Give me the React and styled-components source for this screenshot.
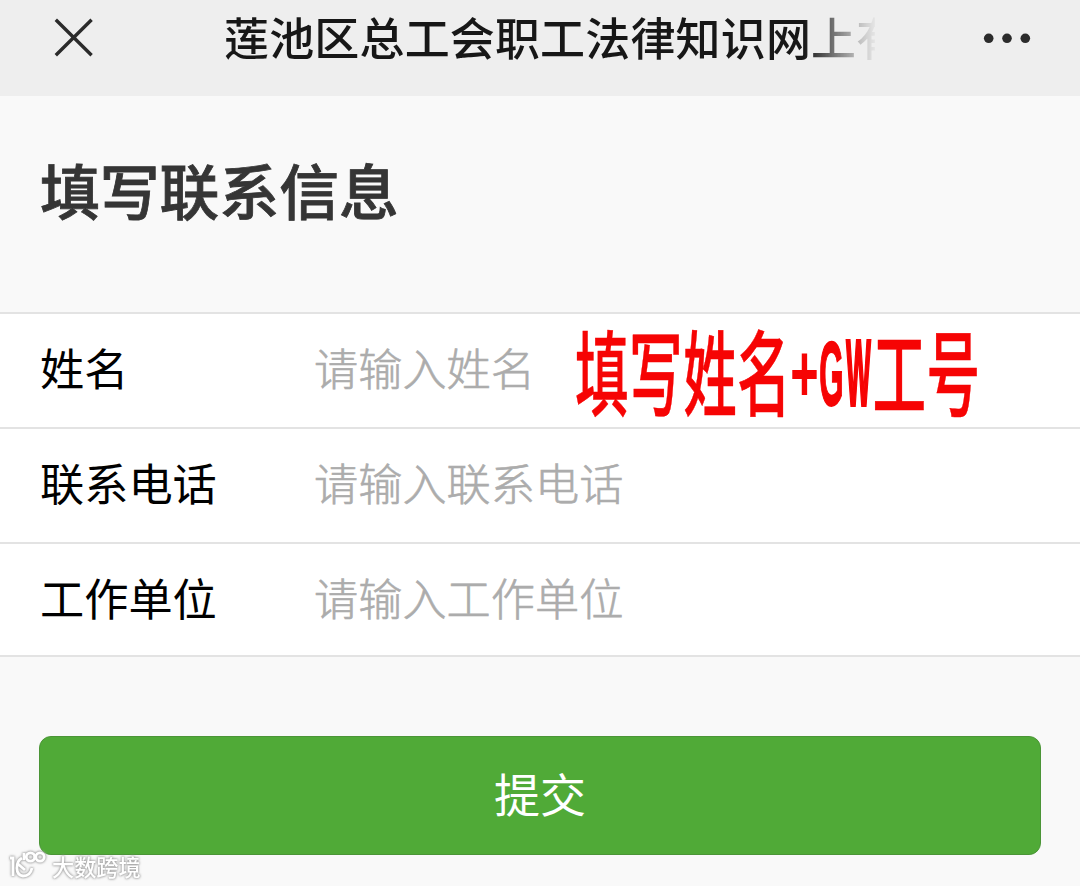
import React from 'react';
import styled, { createGlobalStyle } from 'styled-components';

const GlobalStyle = createGlobalStyle`
  * { box-sizing: border-box; }
  body {
    margin: 0;
    background: #f9f9f9;
    font-family: "Noto Sans CJK SC", sans-serif;
  }
`;

const Page = styled.div`
  position: relative;
  width: 1080px;
  height: 886px;
  overflow: hidden;
  background: #f9f9f9;
`;

const NavBar = styled.header`
  display: flex;
  align-items: flex-start;
  height: 96px;
  background: #eeeeee;
`;

const CloseIcon = styled.svg`
  flex: none;
  width: 40px;
  height: 40px;
  margin: 18px 0 0 54px;
`;

const NavTitle = styled.div`
  flex: none;
  width: 651px;
  height: 66px;
  margin: 4px 0 0 130px;
  overflow: hidden;
  white-space: nowrap;
  font-size: 45px;
  line-height: 66px;
  letter-spacing: 0.16px;
  font-weight: 500;
  color: #171717;
  -webkit-mask-image: linear-gradient(to right, #000 580px, rgba(0, 0, 0, 0.25) 632px, transparent 654px);
  mask-image: linear-gradient(to right, #000 580px, rgba(0, 0, 0, 0.25) 632px, transparent 654px);
`;

const MoreIcon = styled.svg`
  flex: none;
  width: 48px;
  height: 12px;
  margin: 32px 0 0 108px;
`;

const Heading = styled.h1`
  height: 216px;
  margin: 0;
  padding: 49px 0 0 40px;
  font-size: 59.8px;
  line-height: 88px;
  font-weight: 500;
  -webkit-text-stroke: 0.8px #353535;
  color: #353535;
`;

const Form = styled.form`
  margin: 0;
`;

const Fields = styled.div`
  height: 345px;
  border-top: 2px solid #e3e3e3;
  background: #fff;
`;

const Field = styled.label`
  display: flex;
  align-items: center;
  height: ${({ $height }) => $height}px;
  padding: 0 0 ${({ $lift }) => $lift}px 40px;
  border-bottom: 2px solid #e3e3e3;
`;

const FieldName = styled.span`
  width: 274px;
  font-size: 44.2px;
  line-height: 64px;
  color: #000;
`;

const Input = styled.input`
  width: 700px;
  height: 64px;
  padding: 0;
  border: 0;
  outline: 0;
  background: transparent;
  font: 300 44.2px/64px "Noto Sans CJK SC", sans-serif;
  &::placeholder {
    color: #acacac;
    opacity: 1;
    -webkit-text-stroke: 0.6px #acacac;
  }
`;

const Submit = styled.button`
  display: block;
  width: 1002px;
  height: 119px;
  margin: 79px 0 0 39px;
  padding: 0 0 7px;
  border: 1px solid #4b9537;
  border-radius: 12px;
  background: #50aa37;
  color: #fff;
  font: 400 46px/66px "Noto Sans CJK SC", sans-serif;
`;

const Note = styled.div`
  position: absolute;
  left: 575px;
  top: 319px;
  display: flex;
  align-items: center;
  height: 100px;
  color: #f60404;
  white-space: nowrap;
`;

const NoteHan = styled.span`
  font-size: 53.6px;
  line-height: 80px;
  font-weight: 500;
  letter-spacing: 0.5px;
  -webkit-text-stroke: 0.3px #f60404;
  transform: scaleY(1.74);
`;

const NoteLatin = styled.span`
  display: flex;
  justify-content: center;
  width: 27px;
  font-family: "Liberation Sans", sans-serif;
  font-size: 54px;
  line-height: 80px;
  font-weight: 700;
  -webkit-text-stroke: ${({ $stroke }) => $stroke}px #f60404;
  transform: translate(0, ${({ $shift }) => $shift}px) scale(${({ $sx }) => $sx}, ${({ $sy }) => $sy});
`;

const Watermark = styled.div`
  position: absolute;
  left: 8px;
  top: 849px;
  display: flex;
  align-items: center;
  height: 34px;
  filter: drop-shadow(0 0 1px #999) drop-shadow(0 0 1px #bbb);
`;

const WatermarkLogo = styled.svg`
  width: 40px;
  height: 32px;
  margin-right: 4px;
`;

const WatermarkText = styled.span`
  font-size: 22.2px;
  line-height: 32px;
  font-weight: 500;
  color: #fff;
`;

const fields = [
  { name: '姓名', hint: '请输入姓名', height: 115, lift: 7 },
  { name: '联系电话', hint: '请输入联系电话', height: 115, lift: 7 },
  { name: '工作单位', hint: '请输入工作单位', height: 113, lift: 5 },
];

export default function App() {
  return (
    <Page>
      <GlobalStyle />
      <NavBar>
        <CloseIcon viewBox="0 0 40 40" stroke="#2b2b2b" strokeWidth="3.4" fill="none">
          <path d="M1.8 1.8 37.6 37.2M37.6 1.8 1.8 37.2" />
        </CloseIcon>
        <NavTitle>莲池区总工会职工法律知识网上有</NavTitle>
        <MoreIcon viewBox="0 0 48 12" fill="#2b2b2b">
          <circle cx="5.7" cy="6.3" r="4.8" />
          <circle cx="24" cy="6.3" r="4.8" />
          <circle cx="42.3" cy="6.3" r="4.8" />
        </MoreIcon>
      </NavBar>
      <Heading>填写联系信息</Heading>
      <Form onSubmit={(event) => event.preventDefault()}>
        <Fields>
          {fields.map(({ name, hint, height, lift }) => (
            <Field key={name} $height={height} $lift={lift}>
              <FieldName>{name}</FieldName>
              <Input placeholder={hint} />
            </Field>
          ))}
        </Fields>
        <Submit type="submit">提交</Submit>
      </Form>
      <Note>
        <NoteHan>填写姓名</NoteHan>
        <NoteLatin $stroke={0} $shift={3} $sx={0.9} $sy={1.5}>+</NoteLatin>
        <NoteLatin $stroke={1.2} $shift={4} $sx={0.58} $sy={1.68}>G</NoteLatin>
        <NoteLatin $stroke={2.4} $shift={4} $sx={0.48} $sy={1.7}>W</NoteLatin>
        <NoteHan>工号</NoteHan>
      </Note>
      <Watermark>
        <WatermarkLogo viewBox="0 0 40 32" fill="none" stroke="#fff" strokeWidth="2.8">
          <path d="M2 8h3v18" />
          <path d="M14 8C7 12 7 25 15 26c5 0 8-3 9-8M10 14l7 6" />
          <circle cx="22.500" cy="7" r="4.200" />
          <circle cx="32" cy="7" r="4.200" />
          <path d="M16 3v7" />
        </WatermarkLogo>
        <WatermarkText>大数跨境</WatermarkText>
      </Watermark>
    </Page>
  );
}
